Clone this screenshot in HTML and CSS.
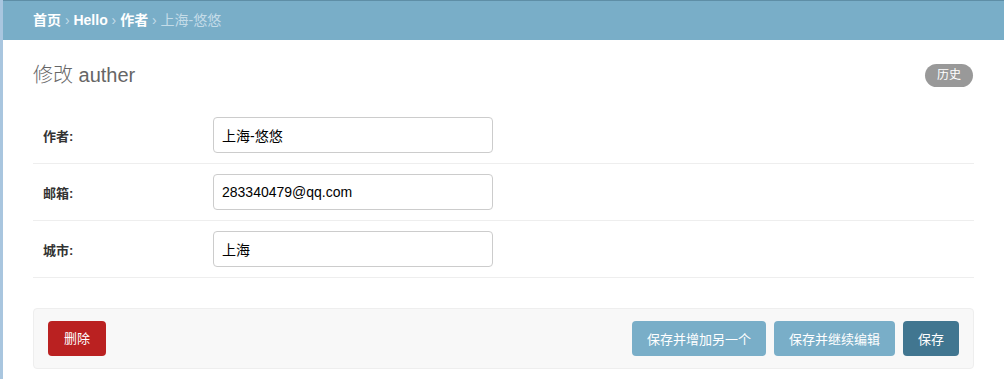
FILE: index.html
```html
<!DOCTYPE html>
<html lang="zh-CN">
<head>
    <meta charset="UTF-8">
    <meta name="viewport" content="width=device-width, initial-scale=1.0">
    <title>修改 auther | Django 站点管理员</title>
    <link rel="stylesheet" href="styles.css">
</head>
<body>
    <div class="page">
        <div class="breadcrumbs">
            <a href="#">首页</a> &rsaquo; <a href="#">Hello</a> &rsaquo; <a href="#">作者</a> &rsaquo; 上海-悠悠
        </div>

        <main class="content">
            <div class="content-head">
                <h1>修改 auther</h1>
                <a href="#" class="history-link">历史</a>
            </div>

            <form id="autherForm">
                <fieldset class="module">
                    <div class="form-row">
                        <label for="id_name">作者:</label>
                        <input type="text" id="id_name" name="name" value="上海-悠悠">
                    </div>
                    <div class="form-row">
                        <label for="id_email">邮箱:</label>
                        <input type="text" id="id_email" name="email" value="283340479@qq.com">
                    </div>
                    <div class="form-row">
                        <label for="id_city">城市:</label>
                        <input type="text" id="id_city" name="city" value="上海">
                    </div>
                </fieldset>

                <div class="submit-row">
                    <a href="#" class="deletelink">删除</a>
                    <div class="submit-actions">
                        <button type="submit" class="btn">保存并增加另一个</button>
                        <button type="submit" class="btn">保存并继续编辑</button>
                        <button type="submit" class="btn btn-default">保存</button>
                    </div>
                </div>
            </form>
        </main>
    </div>
</body>
</html>
```

FILE: styles.css
```css
:root {
    --header: #79aec8;
    --primary: #417690;
    --delete: #ba2121;
    --text: #333;
    --line: #eee;
}

* {
    margin: 0;
    padding: 0;
    box-sizing: border-box;
}

body {
    font-family: "Liberation Sans", "Noto Sans CJK SC", sans-serif;
    font-size: 13px;
    color: var(--text);
    background: #fff;
}

.page {
    min-height: 100vh;
    border-left: 3px solid #a9c6df;
}

.breadcrumbs {
    height: 40px;
    padding: 10px 30px;
    background-color: var(--header);
    border-top: 1px solid #5e8ea6;
    color: #c4dce8;
    font-size: 14px;
    line-height: 18px;
}

.breadcrumbs a {
    color: #fff;
    font-weight: bold;
    text-decoration: none;
}

.content {
    padding: 20px 30px 0;
}

.content-head {
    display: flex;
    justify-content: space-between;
    align-items: center;
    margin-bottom: 17px;
}

.content-head h1 {
    font-size: 20px;
    font-weight: 300;
    color: #666;
    line-height: 30px;
}

.history-link {
    background: #999;
    color: #fff;
    font-size: 12px;
    line-height: 15px;
    padding: 4px 12px;
    border-radius: 12px;
    text-decoration: none;
    margin-right: 1px;
}

.module {
    border: none;
    margin-bottom: 30px;
}

.form-row {
    display: flex;
    align-items: center;
    padding: 10px;
    border-bottom: 1px solid var(--line);
}

.form-row label {
    width: 170px;
    font-weight: bold;
    color: var(--text);
}

.form-row input {
    width: 280px;
    height: 36px;
    padding: 5px 8px;
    border: 1px solid #ccc;
    border-radius: 4px;
    font-family: inherit;
    font-size: 14px;
    color: #000;
}

.submit-row {
    display: flex;
    justify-content: space-between;
    align-items: center;
    padding: 12px 14px;
    background: #f8f8f8;
    border: 1px solid var(--line);
    border-radius: 4px;
}

.deletelink {
    display: block;
    background: var(--delete);
    color: #fff;
    height: 35px;
    line-height: 35px;
    padding: 0 16px;
    border-radius: 4px;
    text-decoration: none;
}

.submit-actions {
    display: flex;
    gap: 8px;
}

.btn {
    height: 35px;
    padding: 0 15px;
    background: var(--header);
    color: #fff;
    border: none;
    border-radius: 4px;
    font-family: inherit;
    font-size: 13px;
    cursor: pointer;
}

.btn-default {
    background: var(--primary);
}
```
